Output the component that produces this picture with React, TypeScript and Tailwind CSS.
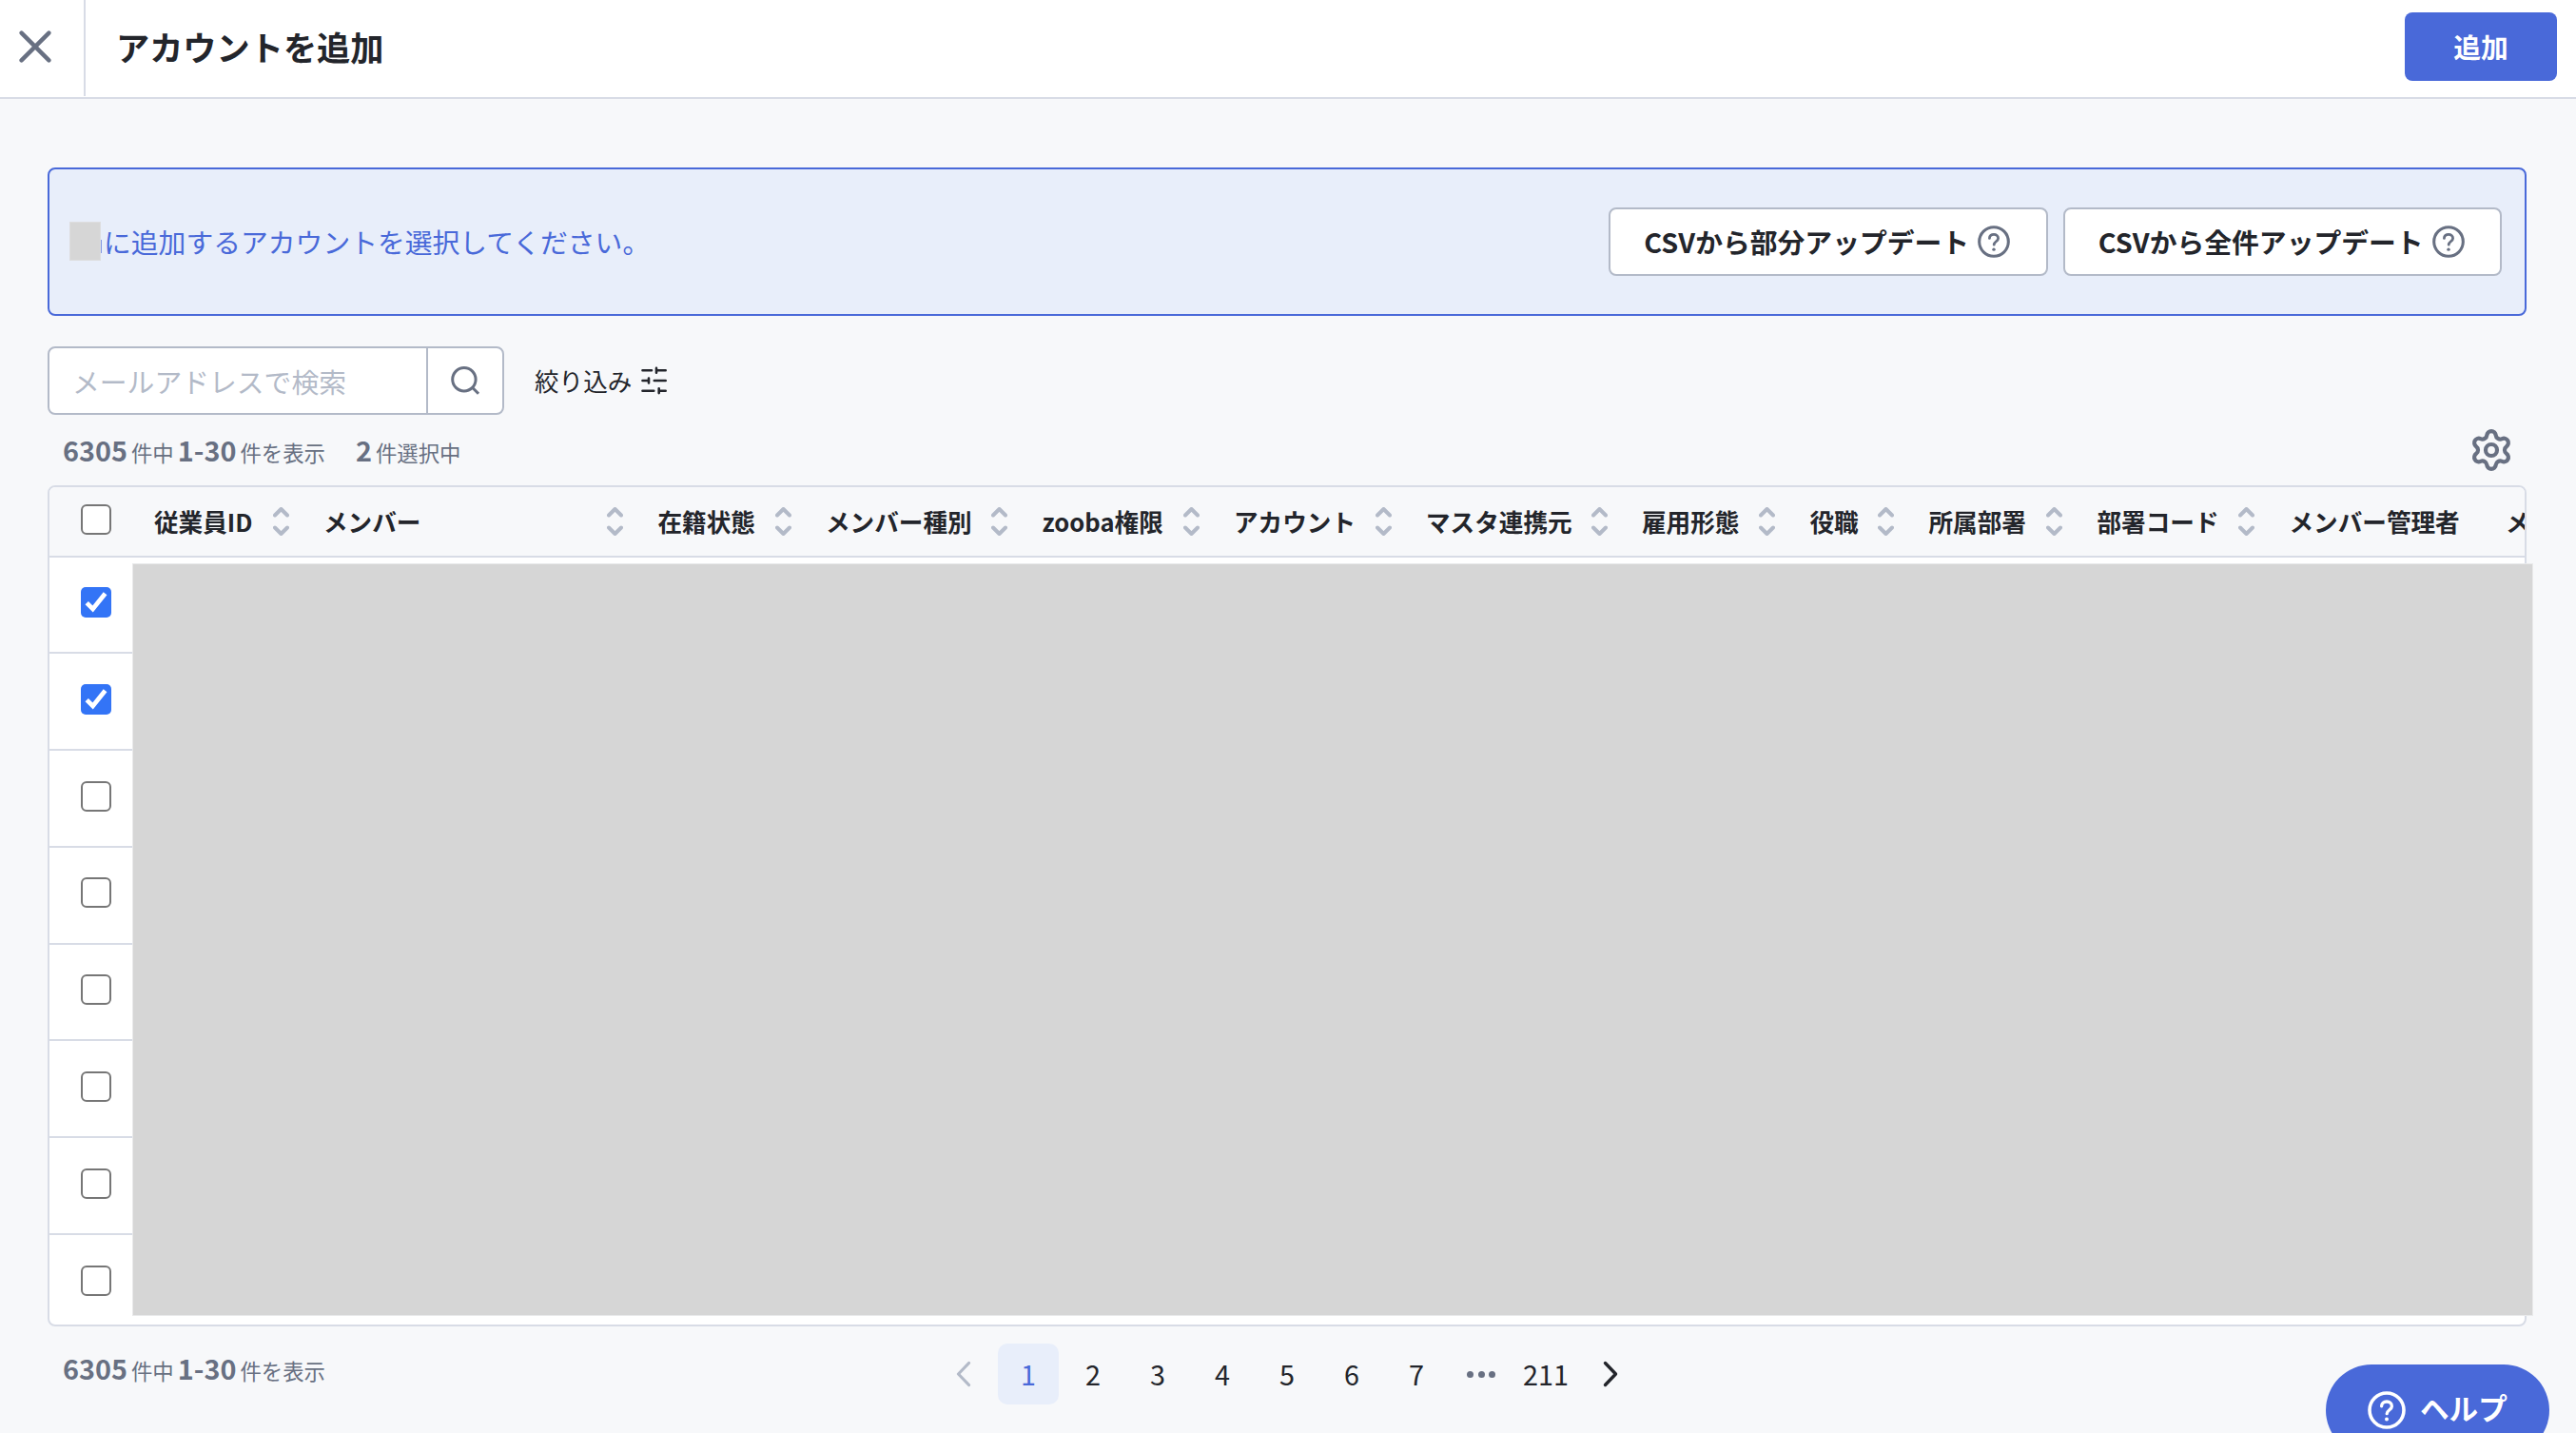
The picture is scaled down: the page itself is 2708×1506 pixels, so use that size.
import React, { useState } from 'react';
import { Settings } from 'lucide-react';

type Column = {
  label: string;
  width: string;
  sortable: boolean;
};

const columns: Column[] = [
  { label: '従業員ID', width: 'w-[178px]', sortable: true },
  { label: 'メンバー', width: 'w-[351.5px]', sortable: true },
  { label: '在籍状態', width: 'w-[176.5px]', sortable: true },
  { label: 'メンバー種別', width: 'w-[227.5px]', sortable: true },
  { label: 'zooba権限', width: 'w-[201.5px]', sortable: true },
  { label: 'アカウント', width: 'w-[202px]', sortable: true },
  { label: 'マスタ連携元', width: 'w-[227px]', sortable: true },
  { label: '雇用形態', width: 'w-[176.5px]', sortable: true },
  { label: '役職', width: 'w-[125px]', sortable: true },
  { label: '所属部署', width: 'w-[177px]', sortable: true },
  { label: '部署コード', width: 'w-[202px]', sortable: true },
  { label: 'メンバー管理者', width: 'w-[227.5px]', sortable: false },
  { label: 'メ', width: 'w-[100px]', sortable: false },
];

const pages = ['1', '2', '3', '4', '5', '6', '7'];

const QuestionIcon = ({ className }: { className: string }) => (
  <svg viewBox="0 0 40 40" fill="none" stroke="currentColor" strokeLinecap="round" className={className}>
    <circle cx="20" cy="20" r="18" strokeWidth="3.6" />
    <path d="M14.6 15.8c0-3 2.4-4.8 5.4-4.8s5.4 1.8 5.4 4.9c0 3.6-5.2 4-5.2 7.8" strokeWidth="3.3" />
    <circle cx="20" cy="29.6" r="2" fill="currentColor" stroke="none" />
  </svg>
);

const SortIcon = () => (
  <svg viewBox="0 0 17 30" fill="none" stroke="#b3bac8" strokeWidth="4" strokeLinecap="round" strokeLinejoin="round" className="h-[30px] w-[17px] shrink-0">
    <path d="M2 8.5 8.5 2 15 8.5M2 21.5 8.5 28 15 21.5" />
  </svg>
);

const Checkbox = ({ checked, onChange }: { checked: boolean; onChange: () => void }) => (
  <button
    role="checkbox"
    aria-checked={checked}
    onClick={onChange}
    className={`flex h-8 w-8 shrink-0 items-center justify-center ${
      checked ? 'rounded-[5px] bg-[#3374f6]' : 'rounded-[6px] border-[2.5px] border-[#767676] bg-white'
    }`}
  >
    {checked && (
      <svg viewBox="0 0 32 32" fill="none" stroke="#fff" strokeWidth="4.8" className="h-8 w-8">
        <path d="M6.2 16.6 12.6 23 25.6 6.8" />
      </svg>
    )}
  </button>
);

const ResultCount = ({ selected }: { selected?: number }) => (
  <div className="flex items-baseline whitespace-nowrap text-[22.4px] leading-9 text-[#687082]">
    <span className="text-[28.8px] font-bold">6305</span>
    <span className="ml-1">件中</span>
    <span className="ml-1 text-[28.8px] font-bold">1-30</span>
    <span className="ml-1">件を表示</span>
    {selected !== undefined && (
      <>
        <span className="ml-8 text-[28.8px] font-bold">{selected}</span>
        <span className="ml-1">件選択中</span>
      </>
    )}
  </div>
);

const CsvButton = ({ label }: { label: string }) => (
  <button className="flex h-[72px] w-[461.5px] items-center justify-center gap-[9px] rounded-lg border-2 border-[#b3bac8] bg-white pr-[2px] text-[28.8px] font-bold whitespace-nowrap">
    {label}
    <QuestionIcon className="h-[34px] w-[34px] text-[#687082]" />
  </button>
);

const App = () => {
  const [checked, setChecked] = useState([true, true, false, false, false, false, false, false]);
  const allChecked = checked.every(Boolean);

  return (
    <div className="relative flex h-[1506px] w-[2708px] flex-col overflow-hidden bg-[#f7f8fa] font-['Noto_Sans_CJK_JP',sans-serif] text-[#23252b]">
      {/* Header */}
      <header className="flex h-[104px] shrink-0 items-start border-b-2 border-[#d8dce6] bg-white">
        <button className="flex h-[101px] w-[90px] items-center border-r-2 border-[#d8dce6] pb-[3px] pl-5">
          <svg viewBox="0 0 34 34" fill="none" stroke="#687082" strokeWidth="4.4" strokeLinecap="round" className="h-[34px] w-[34px]">
            <path d="M2.6 2.6 31.4 31.4M31.4 2.6 2.6 31.4" />
          </svg>
        </button>
        <h1 className="ml-8 text-[35.2px] leading-[98px] font-bold">アカウントを追加</h1>
        <button className="mt-[13px] mr-5 ml-auto h-[72px] w-40 rounded-lg bg-[#4969d9] text-[28.8px] font-bold text-white">追加</button>
      </header>

      <main className="flex flex-col pt-[72px] pr-[52px] pl-[50px]">
        {/* Notice */}
        <section className="flex h-[156px] items-center rounded-lg border-2 border-[#4969d9] bg-[#e8eefa] pr-6 pl-[21px]">
          <div className="mb-px h-[41px] w-[33px] border border-[#dddddf] bg-[#d6d6d6]" />
          <div className="mt-[10px] h-[14px] w-px bg-[#8298e4]" />
          <p className="ml-[2px] text-[28.8px] text-[#4969d9]">に追加するアカウントを選択してください。</p>
          <div className="ml-auto flex gap-4">
            <CsvButton label="CSVから部分アップデート" />
            <CsvButton label="CSVから全件アップデート" />
          </div>
        </section>

        {/* Search */}
        <div className="mt-8 flex h-[72px] items-center">
          <div className="flex h-full w-[480px] overflow-hidden rounded-lg border-2 border-[#b3bac8] bg-white">
            <input
              placeholder="メールアドレスで検索"
              className="w-[396px] pt-[2px] pl-6 text-[28.8px] outline-none placeholder:text-[#b3bac8]"
            />
            <button className="flex flex-1 items-center justify-center border-l-2 border-[#b3bac8]">
              <svg viewBox="0 0 32 32" fill="none" stroke="#687082" strokeWidth="3" className="h-8 w-8">
                <circle cx="14.9" cy="14.7" r="12.2" />
                <path d="m23 22.8 7 7" />
              </svg>
            </button>
          </div>
          <button className="ml-8 flex items-center gap-[10px] text-[25.6px]">
            絞り込み
            <svg viewBox="0 0 28 30" fill="none" stroke="#23252b" strokeWidth="2.6" strokeLinecap="round" className="h-[30px] w-7">
              <path d="M1.5 4.3H11M16 1.9v4.8M16 4.3h9.7M1.5 15H8M8 12.6v4.8M13.8 15h11.9M1.5 25.7h11.8M18.7 23.3v4.8M18.7 25.7h7" />
            </svg>
          </button>
        </div>

        <div className="flex h-[74px] items-center justify-between pr-[13px] pl-4">
          <div className="pt-[2px]">
            <ResultCount selected={2} />
          </div>
          <Settings size={48} strokeWidth={2.1} className="text-[#687082]" />
        </div>

        {/* Table */}
        <div className="relative h-[884px]">
          <div className="flex h-full flex-col overflow-hidden rounded-lg border-2 border-[#d8dce6] bg-white">
            <div className="flex h-[74px] shrink-0 items-center border-b-2 border-[#d8dce6] bg-[#f7f8fa]">
              <div className="mt-[-4px] w-[110px] shrink-0 pl-[33px]">
                <Checkbox checked={allChecked} onChange={() => setChecked(checked.map(() => !allChecked))} />
              </div>
              {columns.map((column) => (
                <div
                  key={column.label}
                  className={`flex shrink-0 items-center justify-between text-[25.6px] font-bold whitespace-nowrap ${column.width} ${
                    column.sortable ? 'pr-[36.5px]' : ''
                  }`}
                >
                  {column.label}
                  {column.sortable && <SortIcon />}
                </div>
              ))}
            </div>
            <div className="mt-[-0.5px]">
              {checked.map((value, index) => (
                <div key={index} className="flex h-[101.8px] items-center border-b-2 border-[#d8dce6] pb-[4.6px] pl-[33px]">
                  <Checkbox
                    checked={value}
                    onChange={() => setChecked(checked.map((v, i) => (i === index ? !v : v)))}
                  />
                </div>
              ))}
            </div>
          </div>
          {/* Masked cell contents, laid over the table edge */}
          <div className="absolute top-[82px] left-[89px] h-[791px] w-[2524px] border border-[#e9eaeb] bg-[#d6d6d6]" />
        </div>

        {/* Footer */}
        <div className="relative flex h-[100px] justify-center">
          <div className="absolute top-[26px] left-4">
            <ResultCount />
          </div>
          <nav className="mt-[18px] flex h-16 gap-1 text-[28.8px]">
            <button className="flex w-16 items-center justify-center">
              <svg viewBox="0 0 16 28" fill="none" stroke="#b3bac8" strokeWidth="3.2" strokeLinecap="round" strokeLinejoin="round" className="h-7 w-4">
                <path d="M13.5 2.5 2.5 14l11 11.5" />
              </svg>
            </button>
            {pages.map((page) => (
              <button
                key={page}
                className={`w-16 rounded-[10px] ${page === '1' ? 'bg-[#e8eefa] text-[#4969d9]' : ''}`}
              >
                {page}
              </button>
            ))}
            <span className="flex w-16 items-center justify-center gap-[4.5px]">
              <i className="h-[7px] w-[7px] rounded-full bg-[#687082]" />
              <i className="h-[7px] w-[7px] rounded-full bg-[#687082]" />
              <i className="h-[7px] w-[7px] rounded-full bg-[#687082]" />
            </span>
            <button className="w-16">211</button>
            <button className="flex w-16 items-center justify-center">
              <svg viewBox="0 0 16 28" fill="none" stroke="#23252b" strokeWidth="3.4" strokeLinecap="round" strokeLinejoin="round" className="h-7 w-4">
                <path d="M2.5 2.5 13.5 14l-11 11.5" />
              </svg>
            </button>
          </nav>
        </div>
      </main>

      {/* Floating help button */}
      <button className="absolute top-[1434px] left-[2445px] flex h-24 w-[235px] items-center rounded-full bg-[#4969d9] pl-11 text-[30.6px] font-bold text-white">
        <QuestionIcon className="h-10 w-10" />
        <span className="mb-1 ml-[15px]">ヘルプ</span>
      </button>
    </div>
  );
};

export default App;
